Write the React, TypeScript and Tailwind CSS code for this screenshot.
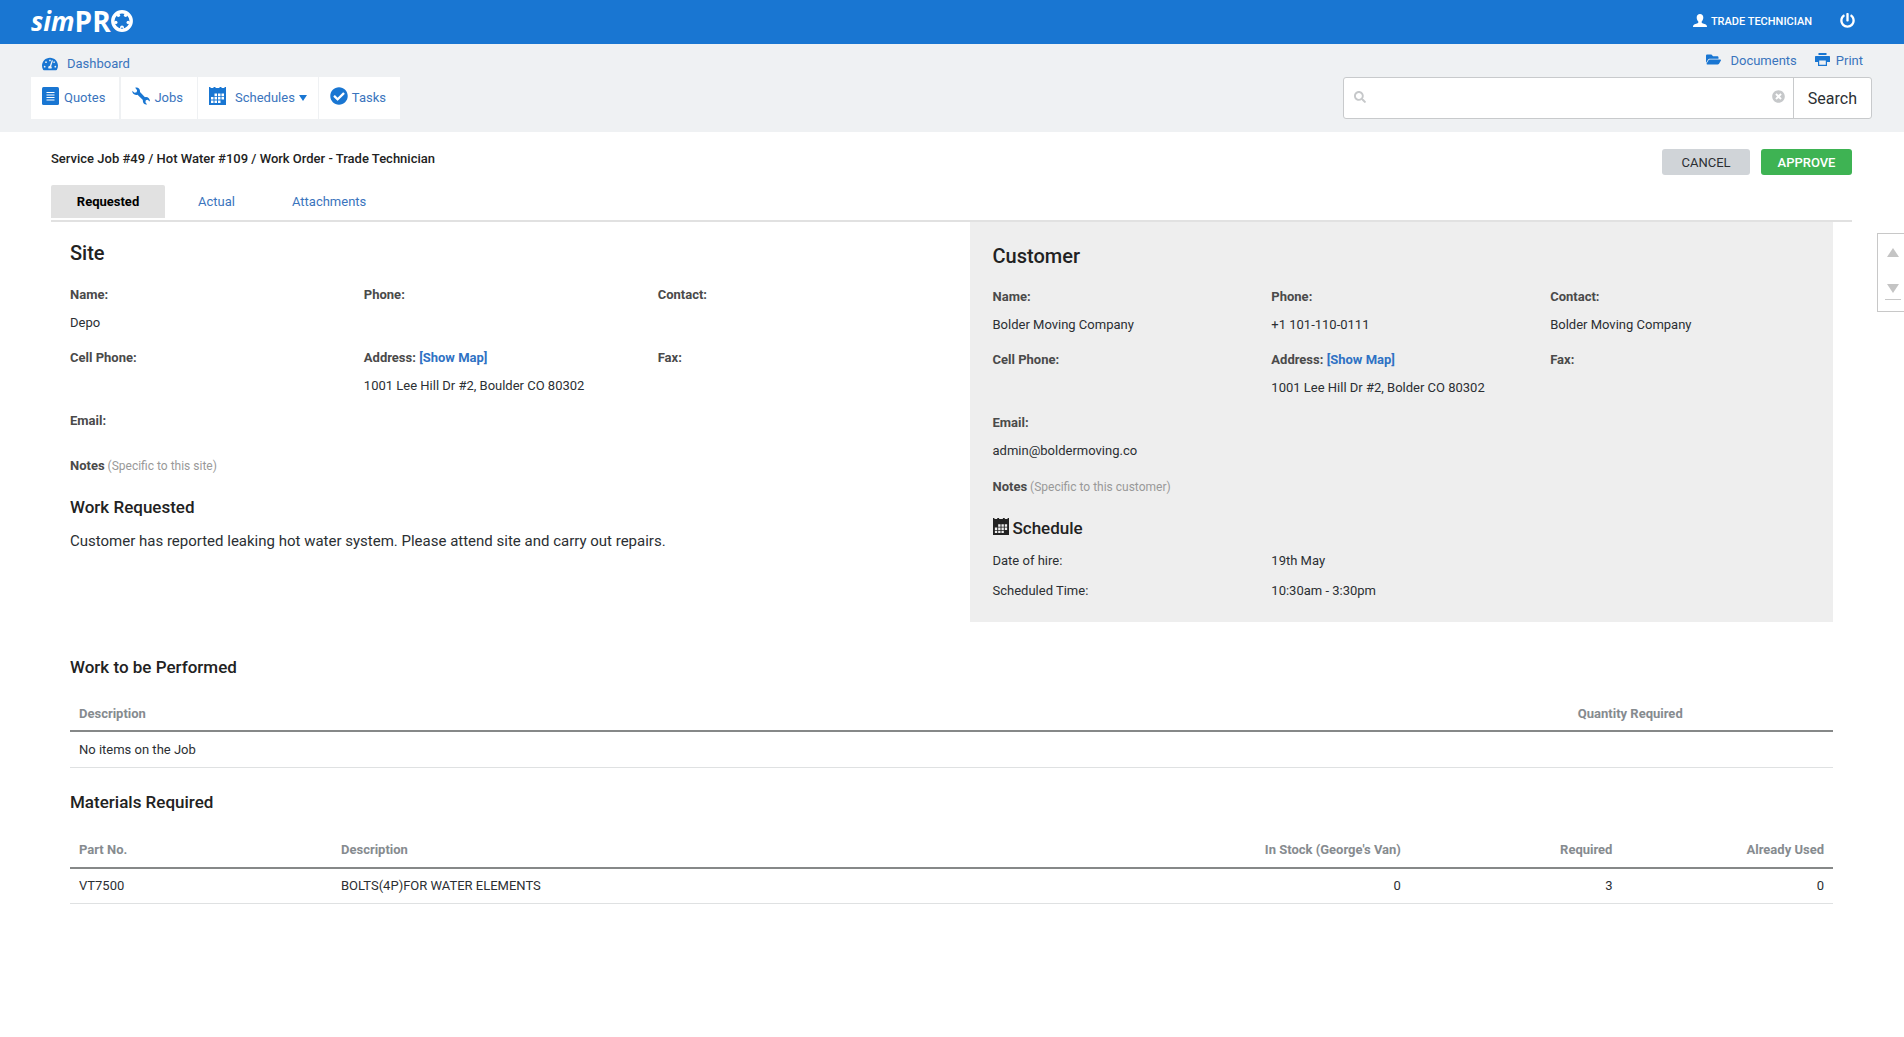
import React from "react";
import { FaFolderOpen, FaPowerOff, FaTimesCircle, FaCheckCircle, FaTachometerAlt, FaSearch } from "react-icons/fa";

const link = "text-[#3a74bd]";

function CalendarIcon({ className = "" }: { className?: string }) {
  return (
    <svg className={className} viewBox="0 0 17 18" fill="currentColor" aria-hidden="true">
      <path
        fillRule="evenodd"
        d="M0 0H1.500V1H4.500V0H6.500V1H10.500V0H12.500V1H15.500V0H17V18H0ZM5.500 6.500H8V9.200H5.500ZM9 6.500H11.500V9.200H9ZM12.500 6.500H15V9.200H12.500ZM2 10H4.500V12.600H2ZM5.500 10H8V12.600H5.500ZM9 10H11.500V12.600H9ZM12.500 10H15V12.600H12.500ZM2 13.400H4.500V16H2ZM5.500 13.400H8V16H5.500ZM9 13.400H11.500V16H9Z"
      />
    </svg>
  );
}

function QuoteIcon() {
  return (
    <svg className="mb-1 h-[18px] w-[17px]" viewBox="0 0 17 18" aria-hidden="true">
      <rect width="17" height="18" rx="1.500" fill="#1976d2" />
      <path d="M4.500 5.500h8M4.500 8h8M4.500 10.500h8M4.500 13h8" stroke="#fff" strokeWidth="1.200" />
    </svg>
  );
}

function WrenchIcon() {
  return (
    <svg className="mb-1 size-[18px]" viewBox="0 0 18 18" fill="#1976d2" aria-hidden="true">
      <path d="M3.200 .7C5.600 -.2 8.500 1.600 8 5L13 10.200C15.800 9.500 18.200 11.700 17.900 14.500L15.600 12.800L13.800 13.300L13.400 15.200L15.100 17.500C12.400 18 10.300 15.700 10.900 12.900L5.500 7.700C2.800 8.600 .2 6.800 .2 3.800L2.500 5.700L4.600 5.200L5.100 3.200Z" />
    </svg>
  );
}

function PrintIcon() {
  return (
    <svg className="mb-1 h-[13px] w-[15px]" viewBox="0 0 15 13" fill="#1976d2" aria-hidden="true">
      <path fillRule="evenodd" d="M3.500 0H11.500V2H3.500ZM1 3H14C14.600 3 15 3.400 15 4V9H12V13H3V9H0V4C0 3.400 .4 3 1 3ZM4.200 7.500V11.800H10.800V7.500Z" />
    </svg>
  );
}

function UserIcon() {
  return (
    <svg className="mb-[3px] h-[13px] w-[14px]" viewBox="0 0 14 13" fill="#fff" aria-hidden="true">
      <path d="M7 0C9 0 10.300 1.300 10.300 3.500C10.300 5.300 9.600 6.600 8.700 7.400V8.400C8.700 8.900 9.200 9.100 10 9.400L12.300 10.200C13.500 10.600 14 11.400 14 13H0C0 11.400 .5 10.600 1.700 10.200L4 9.400C4.800 9.100 5.300 8.900 5.300 8.400V7.400C4.400 6.600 3.700 5.300 3.700 3.500C3.700 1.300 5 0 7 0Z" />
    </svg>
  );
}

function Logo() {
  return (
    <a href="#" aria-label="simPRO" className="flex items-center pb-[2px] text-white">
      <span className="font-['Open_Sans',sans-serif] text-[26px] font-bold italic leading-8">sim</span>
      <span className="font-['Open_Sans',sans-serif] text-[28px] font-bold leading-8">PR</span>
      <svg className="size-[22px]" viewBox="0 0 22 22" aria-hidden="true">
        <circle cx="11" cy="11" r="9.200" fill="none" stroke="#fff" strokeWidth="3.400" />
        <g fill="#fff">
          <circle cx="7.400" cy="5.300" r="1.700" />
          <circle cx="14.600" cy="5.300" r="1.700" />
          <circle cx="17.200" cy="12.400" r="1.700" />
          <circle cx="11" cy="17.300" r="1.900" />
          <circle cx="4.800" cy="12.400" r="1.700" />
        </g>
        <circle cx="11" cy="18.300" r=".8" fill="#1976d2" />
      </svg>
    </a>
  );
}

function Field({ label, value, map }: { label: string; value?: string; map?: boolean }) {
  return (
    <div>
      <dt className="font-bold text-[#4a4a4a]">
        {label}
        {map && (
          <>
            {" "}
            <a href="#" className="text-[#2f72c4]">[Show Map]</a>
          </>
        )}
      </dt>
      <dd className="whitespace-nowrap">{value}</dd>
    </div>
  );
}

const th = "px-[9px] pt-1 pb-[2px] h-9 font-bold text-[#868b8f]";
const td = "px-[9px] h-9";

export default function App() {
  return (
    <div className="min-h-screen bg-white font-[Roboto,sans-serif] text-[13px] text-[#2b2f33]">
      <header className="flex h-11 items-center justify-between bg-[#1976d2] pl-[31px] pr-[49px]">
        <Logo />
        <div className="flex items-center gap-7 text-white">
          <a href="#" className="flex items-center gap-1 text-[11px] font-medium">
            <UserIcon />
            TRADE TECHNICIAN
          </a>
          <button type="button" aria-label="Log out" className="pb-[3px]">
            <FaPowerOff className="size-[15px]" />
          </button>
        </div>
      </header>

      <div className="flex h-22 items-start justify-between bg-[#eff1f3] pl-[31px] pr-8">
        <nav>
          <a href="#" className={`flex h-[33px] items-center gap-[9px] pl-[11px] pt-[6px] ${link}`}>
            <FaTachometerAlt className="size-4 text-[#1976d2]" />
            Dashboard
          </a>
          <ul className="flex h-[42px] gap-px">
            <li className="mr-px">
              <a href="#" className={`flex h-full items-center gap-[5px] bg-white pl-[11px] pr-[14px] ${link}`}>
                <QuoteIcon />
                Quotes
              </a>
            </li>
            <li>
              <a href="#" className={`flex h-full items-center gap-1 bg-white pl-[11px] pr-[14px] ${link}`}>
                <WrenchIcon />
                Jobs
              </a>
            </li>
            <li>
              <a href="#" className={`flex h-full items-center bg-white px-[11px] ${link}`}>
                <CalendarIcon className="mr-[9px] mb-1 h-[18px] w-[17px] text-[#1976d2]" />
                Schedules
                <svg className="ml-1 h-[6px] w-2" viewBox="0 0 8 6" fill="#1976d2" aria-hidden="true">
                  <path d="M0 0H8L4 6Z" />
                </svg>
              </a>
            </li>
            <li>
              <a href="#" className={`flex h-full items-center gap-1 bg-white pl-[11px] pr-[14px] ${link}`}>
                <FaCheckCircle className="mb-1 size-[18px] text-[#1976d2]" />
                Tasks
              </a>
            </li>
          </ul>
        </nav>
        <div className="flex flex-col">
          <div className={`flex h-[33px] items-center justify-end gap-[18px] pt-px pr-[9px] ${link}`}>
            <a href="#" className="flex items-center gap-[9px]">
              <FaFolderOpen className="mb-[3px] size-[15px] text-[#1976d2]" />
              Documents
            </a>
            <a href="#" className="flex items-center gap-[6px]">
              <PrintIcon />
              Print
            </a>
          </div>
          <form className="flex h-[42px] rounded-[3px] border border-[#c8cacc] bg-white" onSubmit={(e) => e.preventDefault()}>
            <label htmlFor="search" aria-label="Search" className="flex items-center pl-[10px]">
              <FaSearch className="mb-[2px] size-3 text-[#c6c8ca]" />
            </label>
            <input id="search" type="text" aria-label="Search" className="w-[406px] px-2 outline-none" />
            <button type="reset" aria-label="Clear" className="pr-2 pb-[3px]">
              <FaTimesCircle className="size-[13px] text-[#c6c8ca]" />
            </button>
            <button type="submit" className="border-l border-[#c8cacc] px-[14px] pt-[2px] text-[16px]">
              Search
            </button>
          </form>
        </div>
      </div>

      <div className="flex">
        <main className="min-w-0 flex-1 pl-[51px] pr-[25px]">
          <div className="flex h-[53px] items-start justify-between pt-[17px]">
            <h1 className="leading-5 font-medium text-[#222]">Service Job #49 / Hot Water #109 / Work Order - Trade Technician</h1>
            <div className="flex gap-[11px]">
              <button type="button" className="h-[26px] w-22 rounded-[3px] bg-[#d0d4d8] pt-px">CANCEL</button>
              <button type="button" className="h-[26px] w-[91px] rounded-[3px] bg-[#3eb353] pt-px font-medium text-white">APPROVE</button>
            </div>
          </div>
          <nav className={`flex h-[37px] border-b-2 border-[#e1e1e1] ${link}`}>
            <a href="#" aria-current="page" className="flex h-[33px] w-[114px] items-center justify-center rounded-t-[2px] bg-[#e1e1e1] font-bold text-black">
              Requested
            </a>
            <a href="#" className="flex h-[33px] items-center px-[33px]">Actual</a>
            <a href="#" className="flex h-[33px] items-center px-6">Attachments</a>
          </nav>

          <div className="px-[19px]">
            <div className="flex">
              <section className="w-1/2 pt-[17px]">
                <h2 className="text-[20px] leading-7 font-medium text-[#222]">Site</h2>
                <dl className="mt-[14px] grid grid-cols-3 gap-y-[7px] leading-7">
                  <Field label="Name:" value="Depo" />
                  <Field label="Phone:" />
                  <Field label="Contact:" />
                  <Field label="Cell Phone:" />
                  <Field label="Address:" value="1001 Lee Hill Dr #2, Boulder CO 80302" map />
                  <Field label="Fax:" />
                  <Field label="Email:" />
                </dl>
                <p className="mt-[17px] leading-7 text-[12px] text-[#999]">
                  <b className="text-[13px] text-[#4a4a4a]">Notes</b> (Specific to this site)
                </p>
                <h3 className="mt-[13px] text-[17px] leading-7 font-medium text-[#222]">Work Requested</h3>
                <p className="mt-[6px] text-[15px] leading-7">
                  Customer has reported leaking hot water system. Please attend site and carry out repairs.
                </p>
              </section>
              <div className="w-1/2 pl-[18px]">
                <section className="bg-[#eeeeee] pt-5 pr-1 pb-4 pl-[23px]">
                  <h2 className="text-[20px] leading-7 font-medium text-[#222]">Customer</h2>
                  <dl className="mt-[13px] grid grid-cols-3 gap-y-[7px] leading-7">
                    <Field label="Name:" value="Bolder Moving Company" />
                    <Field label="Phone:" value="+1 101-110-0111" />
                    <Field label="Contact:" value="Bolder Moving Company" />
                    <Field label="Cell Phone:" />
                    <Field label="Address:" value="1001 Lee Hill Dr #2, Bolder CO 80302" map />
                    <Field label="Fax:" />
                    <Field label="Email:" value="admin@boldermoving.co" />
                  </dl>
                  <p className="mt-2 leading-7 text-[12px] text-[#999]">
                    <b className="text-[13px] text-[#4a4a4a]">Notes</b> (Specific to this customer)
                  </p>
                  <h3 className="mt-[13px] flex items-center gap-1 text-[17px] leading-7 font-medium text-[#222]">
                    <CalendarIcon className="mb-1 h-[17px] w-4" />
                    Schedule
                  </h3>
                  <dl className="mt-1 grid grid-cols-3 leading-[30px]">
                    <dt>Date of hire:</dt>
                    <dd className="col-span-2">19th May</dd>
                    <dt>Scheduled Time:</dt>
                    <dd className="col-span-2">10:30am - 3:30pm</dd>
                  </dl>
                </section>
              </div>
            </div>

            <section className="pt-[31px]">
              <h3 className="text-[17px] leading-7 font-medium text-[#222]">Work to be Performed</h3>
              <table className="mt-[14px] w-full border-collapse">
                <thead>
                  <tr className="border-b-2 border-[#868888]">
                    <th className={`${th} text-left`}>Description</th>
                    <th className={`${th} w-[23%] text-center`}>Quantity Required</th>
                  </tr>
                </thead>
                <tbody>
                  <tr className="border-b border-[#dfe1e2]">
                    <td className={td}>No items on the Job</td>
                    <td className={td} />
                  </tr>
                </tbody>
              </table>
            </section>

            <section className="pt-5">
              <h3 className="text-[17px] leading-7 font-medium text-[#222]">Materials Required</h3>
              <table className="mt-4 w-full table-fixed border-collapse">
                <thead>
                  <tr className="border-b-2 border-[#868888]">
                    <th className={`${th} w-[262px] text-left`}>Part No.</th>
                    <th className={`${th} text-left`}>Description</th>
                    <th className={`${th} w-[24%] text-right`}>In Stock (George's Van)</th>
                    <th className={`${th} w-[12%] text-right`}>Required</th>
                    <th className={`${th} w-[12%] text-right`}>Already Used</th>
                  </tr>
                </thead>
                <tbody>
                  <tr className="border-b border-[#dfe1e2]">
                    <td className={td}>VT7500</td>
                    <td className={td}>BOLTS(4P)FOR WATER ELEMENTS</td>
                    <td className={`${td} text-right`}>0</td>
                    <td className={`${td} text-right`}>3</td>
                    <td className={`${td} text-right`}>0</td>
                  </tr>
                </tbody>
              </table>
            </section>
          </div>
        </main>

        <aside className="mt-[101px] flex h-[79px] w-[27px] flex-col items-center gap-[27px] border border-r-0 border-[#c8c8c8] pt-[14px] pl-1">
          <button type="button" aria-label="Scroll up">
            <svg className="block h-[9px] w-3" viewBox="0 0 12 9" fill="#c4c4c4" aria-hidden="true"><path d="M6 0L12 9H0Z" /></svg>
          </button>
          <button type="button" aria-label="Scroll down" className="border-b border-[#c8c8c8] px-[2px] pb-[6px]">
            <svg className="block h-[9px] w-3" viewBox="0 0 12 9" fill="#c4c4c4" aria-hidden="true"><path d="M0 0H12L6 9Z" /></svg>
          </button>
        </aside>
      </div>
    </div>
  );
}
